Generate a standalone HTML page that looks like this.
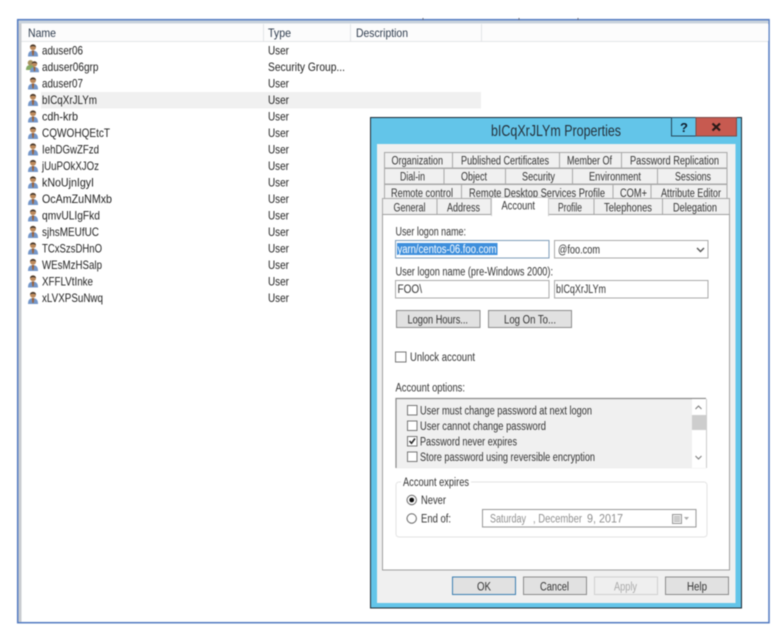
<!DOCTYPE html>
<html><head><meta charset="utf-8"><style>
html,body{margin:0;padding:0;background:#fff}
svg{display:block;filter:blur(.45px)}
text{font-family:"Liberation Sans",sans-serif;font-size:11.5px;fill:#333}
.l text{font-size:12px;fill:#222}
.h text{font-size:12px;fill:#2c3a4c}
.t rect{fill:#f0f0f0;stroke:#a8a8a8}
.b{fill:#e1e1e1;stroke:#8c8c8c}
.i{fill:#fff;stroke:#aaa}
.c{fill:#fff;stroke:#777}
</style></head><body>
<svg width="781" height="628" viewBox="0 0 781 628" xmlns="http://www.w3.org/2000/svg">
<defs>
<g id="u"><path d="M0 12.500 C0 8 1.800 6.800 5 6.600 C8.200 6.800 10 8 10 12.500 Z" fill="#7396c9"/><path d="M3.800 6.500 L6.200 6.500 L5.600 11.500 L4.400 11.500 Z" fill="#9c5f33"/><circle cx="5" cy="3.200" r="3" fill="#bd8a5c"/><path d="M2 3.200 C2 -0.300 8 -0.300 8 3.200 C6.500 1.800 3.500 1.800 2 3.200 Z" fill="#3f352c"/></g>
</defs>
<!-- outer frame -->
<rect x="17.700" y="19.700" width="751.300" height="603" fill="#fff" stroke="#5079c0" stroke-width="1.500"/>
<rect x="18.500" y="20.500" width="3" height="601.500" fill="#c9ccd0"/>
<rect x="18.500" y="20.500" width="750" height="3" fill="#c9d2dc"/>
<path d="M423 18v2M519 18v2M578 18v2" stroke="#667" stroke-width="1"/>
<!-- header -->
<rect x="21.500" y="24" width="747" height="17" fill="#fcfcfc"/>
<path d="M21.500 41.500H768" stroke="#e3e5e8"/>
<path d="M263.500 24v17M350.500 24v17M481.500 24v17" stroke="#e3e5e8"/>
<g class="h">
<text x="28" y="37" textLength="28" lengthAdjust="spacingAndGlyphs">Name</text>
<text x="268" y="37" textLength="23" lengthAdjust="spacingAndGlyphs">Type</text>
<text x="356" y="37" textLength="52" lengthAdjust="spacingAndGlyphs">Description</text>
</g>
<rect x="41" y="92" width="440" height="16.500" fill="#f0f0f0"/>
<!-- icons -->
<use href="#u" x="28" y="44"/>
<g transform="translate(26,60)"><path d="M0 10 C0 6 2 5 4.500 5 C7 5 9 6 9 10 Z" fill="#84a964"/><circle cx="4.500" cy="2.800" r="2.800" fill="#a89460"/></g>
<use href="#u" transform="translate(30,61) scale(.9)"/>
<use href="#u" x="28" y="77"/>
<use href="#u" x="28" y="93.500"/>
<use href="#u" x="28" y="110"/>
<use href="#u" x="28" y="126.500"/>
<use href="#u" x="28" y="143"/>
<use href="#u" x="28" y="159.500"/>
<use href="#u" x="28" y="176"/>
<use href="#u" x="28" y="192.500"/>
<use href="#u" x="28" y="209"/>
<use href="#u" x="28" y="225.500"/>
<use href="#u" x="28" y="242"/>
<use href="#u" x="28" y="258.500"/>
<use href="#u" x="28" y="275"/>
<use href="#u" x="28" y="291.500"/>
<g class="l">
<text x="42" y="54.500" textLength="41" lengthAdjust="spacingAndGlyphs">aduser06</text>
<text x="42" y="71" textLength="56.500" lengthAdjust="spacingAndGlyphs">aduser06grp</text>
<text x="42" y="87.500" textLength="41" lengthAdjust="spacingAndGlyphs">aduser07</text>
<text x="42" y="104" textLength="55" lengthAdjust="spacingAndGlyphs">bICqXrJLYm</text>
<text x="42" y="120.500" textLength="36" lengthAdjust="spacingAndGlyphs">cdh-krb</text>
<text x="42" y="137" textLength="68" lengthAdjust="spacingAndGlyphs">CQWOHQEtcT</text>
<text x="42" y="153.500" textLength="57" lengthAdjust="spacingAndGlyphs">IehDGwZFzd</text>
<text x="42" y="170" textLength="57" lengthAdjust="spacingAndGlyphs">jUuPOkXJOz</text>
<text x="42" y="186.500" textLength="52" lengthAdjust="spacingAndGlyphs">kNoUjnIgyI</text>
<text x="42" y="203" textLength="70" lengthAdjust="spacingAndGlyphs">OcAmZuNMxb</text>
<text x="42" y="219.500" textLength="58" lengthAdjust="spacingAndGlyphs">qmvULIgFkd</text>
<text x="42" y="236" textLength="57" lengthAdjust="spacingAndGlyphs">sjhsMEUfUC</text>
<text x="42" y="252.500" textLength="60" lengthAdjust="spacingAndGlyphs">TCxSzsDHnO</text>
<text x="42" y="269" textLength="60" lengthAdjust="spacingAndGlyphs">WEsMzHSalp</text>
<text x="42" y="285.500" textLength="51" lengthAdjust="spacingAndGlyphs">XFFLVtInke</text>
<text x="42" y="302" textLength="61" lengthAdjust="spacingAndGlyphs">xLVXPSuNwq</text>
<text x="268" y="54.500" textLength="21" lengthAdjust="spacingAndGlyphs">User</text>
<text x="268" y="71" textLength="77" lengthAdjust="spacingAndGlyphs">Security Group...</text>
<text x="268" y="87.500" textLength="21" lengthAdjust="spacingAndGlyphs">User</text>
<text x="268" y="104" textLength="21" lengthAdjust="spacingAndGlyphs">User</text>
<text x="268" y="120.500" textLength="21" lengthAdjust="spacingAndGlyphs">User</text>
<text x="268" y="137" textLength="21" lengthAdjust="spacingAndGlyphs">User</text>
<text x="268" y="153.500" textLength="21" lengthAdjust="spacingAndGlyphs">User</text>
<text x="268" y="170" textLength="21" lengthAdjust="spacingAndGlyphs">User</text>
<text x="268" y="186.500" textLength="21" lengthAdjust="spacingAndGlyphs">User</text>
<text x="268" y="203" textLength="21" lengthAdjust="spacingAndGlyphs">User</text>
<text x="268" y="219.500" textLength="21" lengthAdjust="spacingAndGlyphs">User</text>
<text x="268" y="236" textLength="21" lengthAdjust="spacingAndGlyphs">User</text>
<text x="268" y="252.500" textLength="21" lengthAdjust="spacingAndGlyphs">User</text>
<text x="268" y="269" textLength="21" lengthAdjust="spacingAndGlyphs">User</text>
<text x="268" y="285.500" textLength="21" lengthAdjust="spacingAndGlyphs">User</text>
<text x="268" y="302" textLength="21" lengthAdjust="spacingAndGlyphs">User</text>
</g>
<!-- dialog -->
<rect x="370.500" y="117.500" width="371" height="490.500" fill="#63c5e9" stroke="#1d2a33"/>
<rect x="377" y="144" width="358.500" height="459" fill="#f0f0f0"/>
<text x="491" y="136" textLength="130" lengthAdjust="spacingAndGlyphs" style="font-size:16px;fill:#25303a">bICqXrJLYm Properties</text>
<rect x="671.500" y="117.500" width="24.500" height="18.500" fill="#63c5e9" stroke="#26465a"/>
<rect x="696" y="117.500" width="40.500" height="18.500" fill="#c75a50" stroke="#7a4a48"/>
<text x="680" y="132" style="font-size:13px;font-weight:bold;fill:#102030">?</text>
<path d="M712.500 123.500L720 130.500M720 123.500L712.500 130.500" stroke="#2a1a18" stroke-width="2.200"/>
<!-- tabs -->
<g class="t">
<rect x="384.500" y="152.500" width="68" height="15.500"/><rect x="452.500" y="152.500" width="107" height="15.500"/><rect x="559.500" y="152.500" width="62" height="15.500"/><rect x="621.500" y="152.500" width="105.500" height="15.500"/>
<rect x="384.500" y="168.500" width="59.500" height="15.500"/><rect x="444" y="168.500" width="61.500" height="15.500"/><rect x="505.500" y="168.500" width="67" height="15.500"/><rect x="572.500" y="168.500" width="85" height="15.500"/><rect x="657.500" y="168.500" width="69.500" height="15.500"/>
<rect x="384.500" y="184.500" width="77" height="15"/><rect x="461.500" y="184.500" width="151.500" height="15"/><rect x="613" y="184.500" width="38" height="15"/><rect x="651" y="184.500" width="76" height="15"/>
</g>
<text x="391.500" y="164.500" textLength="51.500" lengthAdjust="spacingAndGlyphs">Organization</text>
<text x="461" y="164.500" textLength="88" lengthAdjust="spacingAndGlyphs">Published Certificates</text>
<text x="567" y="164.500" textLength="45" lengthAdjust="spacingAndGlyphs">Member Of</text>
<text x="630" y="164.500" textLength="89" lengthAdjust="spacingAndGlyphs">Password Replication</text>
<text x="400" y="180.500" textLength="25" lengthAdjust="spacingAndGlyphs">Dial-in</text>
<text x="461" y="180.500" textLength="26" lengthAdjust="spacingAndGlyphs">Object</text>
<text x="522" y="180.500" textLength="33" lengthAdjust="spacingAndGlyphs">Security</text>
<text x="589" y="180.500" textLength="52" lengthAdjust="spacingAndGlyphs">Environment</text>
<text x="675" y="180.500" textLength="36" lengthAdjust="spacingAndGlyphs">Sessions</text>
<text x="391" y="197" textLength="62" lengthAdjust="spacingAndGlyphs">Remote control</text>
<text x="469" y="197" textLength="136" lengthAdjust="spacingAndGlyphs">Remote Desktop Services Profile</text>
<text x="620" y="197" textLength="27" lengthAdjust="spacingAndGlyphs">COM+</text>
<text x="661" y="197" textLength="60" lengthAdjust="spacingAndGlyphs">Attribute Editor</text>
<g class="t">
<rect x="382.500" y="198.500" width="54.500" height="16"/><rect x="437" y="198.500" width="54" height="16"/><rect x="548.500" y="198.500" width="45.500" height="16"/><rect x="594" y="198.500" width="68.500" height="16"/><rect x="662.500" y="198.500" width="67" height="16"/>
</g>
<rect x="382.500" y="214.500" width="347" height="355.500" fill="#fff" stroke="#a0a0a0"/>
<path d="M491.500 216V197.500H548.500V216" fill="#fff" stroke="#c8c8c8"/>
<rect x="492" y="212" width="56" height="5" fill="#fff"/>
<text x="393.500" y="211.500" textLength="32" lengthAdjust="spacingAndGlyphs">General</text>
<text x="447" y="211.500" textLength="33" lengthAdjust="spacingAndGlyphs">Address</text>
<text x="501.500" y="209.500" textLength="33.500" lengthAdjust="spacingAndGlyphs">Account</text>
<text x="558" y="211.500" textLength="24" lengthAdjust="spacingAndGlyphs">Profile</text>
<text x="604" y="211.500" textLength="48" lengthAdjust="spacingAndGlyphs">Telephones</text>
<text x="673" y="211.500" textLength="44" lengthAdjust="spacingAndGlyphs">Delegation</text>
<!-- logon -->
<text x="395.500" y="235.500" textLength="70.500" lengthAdjust="spacingAndGlyphs">User logon name:</text>
<rect class="i" x="395.500" y="240.500" width="153.500" height="17.500" style="stroke:#7f9db9"/>
<rect x="397" y="243" width="100.500" height="12" fill="#3e8fdc"/>
<text x="397.500" y="253" textLength="99" lengthAdjust="spacingAndGlyphs" style="fill:#fff">yarn/centos-06.foo.com</text>
<rect class="i" x="554.500" y="240.500" width="153.500" height="17.500"/>
<text x="558" y="253.500" textLength="42" lengthAdjust="spacingAndGlyphs">@foo.com</text>
<path d="M697 248l3.500 3.500 3.500-3.500" fill="none" stroke="#555" stroke-width="1.400"/>
<text x="395.500" y="275.500" textLength="157.500" lengthAdjust="spacingAndGlyphs">User logon name (pre-Windows 2000):</text>
<rect class="i" x="395.500" y="280.500" width="153.500" height="17.500"/>
<rect class="i" x="554.500" y="280.500" width="153.500" height="17.500"/>
<text x="397.500" y="293" textLength="24.500" lengthAdjust="spacingAndGlyphs">FOO\</text>
<text x="556" y="293" textLength="50" lengthAdjust="spacingAndGlyphs">bICqXrJLYm</text>
<rect class="b" x="396.500" y="310.500" width="83.500" height="17"/>
<rect class="b" x="488.500" y="310.500" width="83" height="17"/>
<text x="407.500" y="323.500" textLength="60.500" lengthAdjust="spacingAndGlyphs">Logon Hours...</text>
<text x="504" y="323.500" textLength="52" lengthAdjust="spacingAndGlyphs">Log On To...</text>
<rect class="c" x="395.500" y="352" width="10.500" height="10"/>
<text x="410" y="361" textLength="65" lengthAdjust="spacingAndGlyphs">Unlock account</text>
<text x="395.500" y="391.500" textLength="69.500" lengthAdjust="spacingAndGlyphs">Account options:</text>
<!-- options list -->
<rect x="396" y="398.500" width="310" height="70" fill="#f0f0f0"/>
<path d="M396 468V398.500H706" fill="none" stroke="#888" stroke-width="1.200"/>
<rect x="692" y="399" width="14" height="69" fill="#fff"/>
<rect x="692" y="415" width="14" height="15" fill="#cdcdcd"/>
<path d="M706.500 399V468" stroke="#ccc"/>
<path d="M695.500 409l3-3 3 3M695.500 456l3 3 3-3" fill="none" stroke="#777"/>
<rect class="c" x="407.500" y="405.500" width="9.500" height="9.500"/>
<rect class="c" x="407.500" y="421" width="9.500" height="9.500"/>
<rect class="c" x="407.500" y="436.500" width="9.500" height="9.500"/>
<rect class="c" x="407.500" y="452" width="9.500" height="9.500"/>
<path d="M409.500 441l2 2.300 3.500-4.800" fill="none" stroke="#222" stroke-width="1.500"/>
<text x="420" y="414.500" textLength="172" lengthAdjust="spacingAndGlyphs">User must change password at next logon</text>
<text x="420" y="430" textLength="126" lengthAdjust="spacingAndGlyphs">User cannot change password</text>
<text x="420" y="445.500" textLength="97" lengthAdjust="spacingAndGlyphs">Password never expires</text>
<text x="420" y="461" textLength="175" lengthAdjust="spacingAndGlyphs">Store password using reversible encryption</text>
<!-- account expires -->
<rect x="396" y="482" width="311" height="55" rx="3" fill="#fff" stroke="#e4e4e4"/>
<rect x="401" y="478" width="70" height="8" fill="#fff"/>
<text x="403" y="486" textLength="66" lengthAdjust="spacingAndGlyphs">Account expires</text>
<circle cx="411.700" cy="500" r="4.700" fill="#fff" stroke="#666"/>
<circle cx="411.700" cy="500" r="2.400" fill="#111"/>
<text x="421" y="504" textLength="25" lengthAdjust="spacingAndGlyphs">Never</text>
<circle cx="411.700" cy="518.500" r="4.700" fill="#fff" stroke="#666"/>
<text x="421" y="522.500" textLength="30" lengthAdjust="spacingAndGlyphs">End of:</text>
<rect x="482.500" y="509.500" width="213.500" height="17.500" fill="#fff" stroke="#999"/>
<g style="opacity:.55">
<text x="490" y="522.500" textLength="36" lengthAdjust="spacingAndGlyphs">Saturday</text>
<text x="533" y="522.500" textLength="49" lengthAdjust="spacingAndGlyphs">, December</text>
<text x="587" y="522.500" textLength="36" lengthAdjust="spacingAndGlyphs">9, 2017</text>
</g>
<rect x="672.500" y="514.500" width="9" height="9" fill="#eee" stroke="#999"/>
<path d="M674 517h6M674 519h6M674 521h6" stroke="#aaa"/>
<path d="M684 517h5l-2.500 3z" fill="#aaa"/>
<!-- buttons -->
<rect class="b" x="452.500" y="577" width="63" height="17.500" style="stroke:#3c7fb1"/>
<rect class="b" x="523.500" y="577" width="63" height="17.500"/>
<rect x="594.500" y="577" width="63" height="17.500" fill="#efefef" stroke="#d0d0d0"/>
<rect class="b" x="665.500" y="577" width="63" height="17.500"/>
<text x="477" y="590.500" textLength="14" lengthAdjust="spacingAndGlyphs">OK</text>
<text x="540" y="590.500" textLength="29" lengthAdjust="spacingAndGlyphs">Cancel</text>
<text x="614" y="590.500" textLength="23" lengthAdjust="spacingAndGlyphs" style="fill:#aaa">Apply</text>
<text x="687" y="590.500" textLength="20" lengthAdjust="spacingAndGlyphs">Help</text>
</svg>
</body></html>
